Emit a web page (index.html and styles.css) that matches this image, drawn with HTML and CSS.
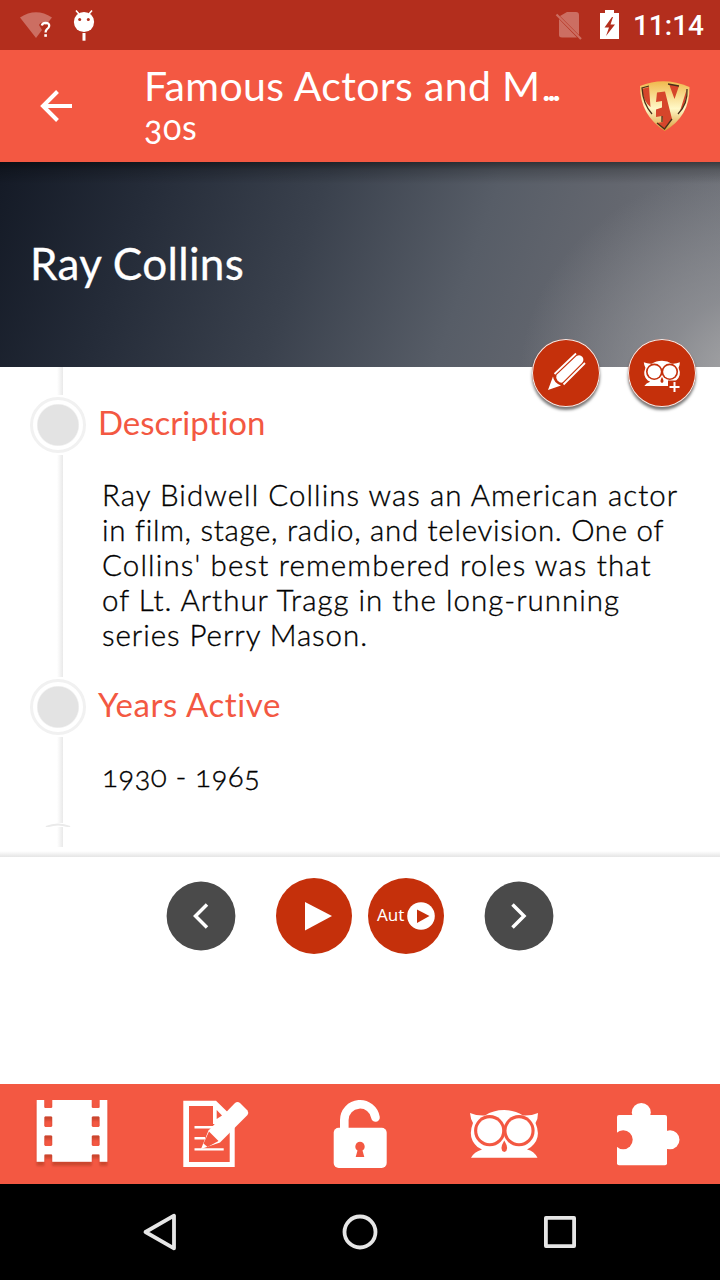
FILE: index.html
```html
<!DOCTYPE html>
<html lang="en">
<head>
<meta charset="utf-8">
<title>Ray Collins</title>
<link rel="stylesheet" href="styles.css">
</head>
<body>
<div class="screen">
  <div class="status">
    <svg class="status-left" viewBox="0 0 120 50" width="120" height="50">
      <path d="M20 17.5Q36 7 52 17.5L46 25Q41 20 39 25L42 30L36 38Z" fill="#cc6e62"/>
      <path d="M41.8 25.5Q42.4 22.8 45.5 22.8Q49.4 23 49.2 26Q49 28 46.8 29.4Q45.6 30.4 45.6 32.6" fill="none" stroke="#fff" stroke-width="2.3"/>
      <rect x="44.3" y="34.2" width="2.6" height="2.6" fill="#fff"/>
      <path d="M76 10.5L79 14M92 10.5L89 14" stroke="#fff" stroke-width="1.6"/>
      <circle cx="84" cy="22" r="10.1" fill="#fff"/>
      <circle cx="79.7" cy="19.5" r="1.5" fill="#b32e1d"/><circle cx="88.3" cy="19.5" r="1.5" fill="#b32e1d"/>
      <rect x="82.5" y="33" width="3" height="7.7" fill="#fff"/>
    </svg>
    <div class="status-right">
      <svg viewBox="550 0 74 50" width="74" height="50">
        <path d="M567 12H576Q579 12 579 15V35L560 16ZM559 19L577 37.5H562Q559 37.5 559 35Z" fill="#cc6e62"/>
        <path d="M556.5 14.5L581 39" stroke="#cc6e62" stroke-width="2.2"/>
        <path d="M600 13H605V10H614V13H619V39H600Z" fill="#fff"/>
        <path d="M612 17L604.5 27.5H609L606 36L615 24.5H610.5L613 17Z" fill="#b32e1d"/>
      </svg>
      <span class="clock">11:14</span>
    </div>
  </div>

  <header class="appbar">
    <svg class="back" viewBox="0 50 112 112" width="112" height="112"><path d="M72 106H43M57.5 91.5L43 106L57.5 120.5" fill="none" stroke="#fff" stroke-width="4"/></svg>
    <div class="titles">
      <div class="title">Famous Actors and M<span class="dots">...</span></div>
      <div class="subtitle">30s</div>
    </div>
    <svg class="logo" viewBox="630 50 70 112" width="70" height="112">
      <defs><linearGradient id="gold" x1="0" y1="0" x2="0" y2="1"><stop offset="0" stop-color="#f0b94d"/><stop offset=".55" stop-color="#fff9c8"/><stop offset="1" stop-color="#d99a35"/></linearGradient></defs>
      <path d="M640 86Q664 76 689.5 87Q690 116 664.7 131Q640 115 640 86Z" fill="url(#gold)"/>
      <path d="M642 89L649 87L650.5 107Q643 101 642 89ZM669 84L679 86L674.5 99ZM686.5 90Q686.5 104 680 111ZM657 92.5L665 91.5L672 119L664.5 129L657 123L663 122L662 116L656 117V109.5L662 107.5V101L656 102Z" fill="#d6452b"/>
      <path d="M649 86L642 88Q643 104 652 114M668 84L679 86M687 89Q688 104 678 114M662 116V122M657 123L664.5 129L672 119" fill="none" stroke="#49301a" stroke-width="1.3"/>
    </svg>
  </header>

  <section class="hero">
    <h1>Ray Collins</h1>
    <div class="fabs">
      <div class="fab"><svg viewBox="532 339 68 68" width="68" height="68">
        <path d="M554.5 374L576 353.5M563.5 384.5L585 363" stroke="#fff" stroke-width="1.8"/>
        <path d="M556.5 375L576.500 356Q580 354 582.5 357Q584.5 360 582 363L563 382Q561 384 557.5 380.5Q555.5 378 556.5 375Z" fill="#fff"/>
        <path d="M553 376.5Q553.5 382.5 561 385.500L548 390Z" fill="#fff"/>
      </svg></div>
      <div class="fab"><svg viewBox="628 339 68 68" width="68" height="68">
        <g transform="translate(662 373.5) scale(.53) translate(-504.3 -1134)"><use href="#owl" style="--bg:#c5300b"/></g>
        <path d="M668 380.5H681V393H668Z" fill="#c5300b"/>
        <path d="M674.5 382V392M669.5 387H679.5" stroke="#fff" stroke-width="2"/>
      </svg></div>
    </div>
  </section>

  <main class="details">
    <article class="entry first">
      <div class="rail"><i class="line top"></i><i class="marker"></i><i class="line rest"></i></div>
      <div class="text">
        <h2>Description</h2>
        <p><span class="l1">Ray Bidwell Collins was an American actor</span><br><span class="l2">in film, stage, radio, and television. One of</span><br><span class="l3">Collins' best remembered roles was that</span><br><span class="l4">of Lt. Arthur Tragg in the long-running</span><br><span class="l5">series Perry Mason.</span></p>
      </div>
    </article>
    <article class="entry second">
      <div class="rail"><i class="line top"></i><i class="marker"></i><i class="line rest"></i></div>
      <div class="text">
        <h2 class="active">Years Active</h2>
        <p class="years">1930 - 1965</p>
      </div>
    </article>
    <div class="rail tail"><svg viewBox="30 823 58 4" width="58" height="4"><path d="M46 827Q58 822 70 827" fill="none" stroke="#eaeaea" stroke-width="2"/></svg><i class="line rest"></i></div>
  </main>

  <div class="controls">
    <svg viewBox="0 0 70 70" width="70" height="70"><circle cx="35" cy="35" r="34.4" fill="#4a4a4a"/><path d="M41 23.5L29.5 35L41 46.5" fill="none" stroke="#fff" stroke-width="3.5"/></svg>
    <svg class="play" viewBox="0 0 76 76" width="76" height="76"><circle cx="38" cy="38" r="38" fill="#c5300b"/><path d="M29 24V52.5L56 38Z" fill="#fff"/></svg>
    <div class="auto"><span>Aut</span><svg viewBox="0 0 28 28" width="28" height="28"><circle cx="14" cy="14" r="13.8" fill="#fff"/><path d="M10 7.5V21L22.5 14Z" fill="#c5300b"/></svg></div>
    <svg class="next" viewBox="0 0 70 70" width="70" height="70"><circle cx="35" cy="35" r="34.4" fill="#4a4a4a"/><path d="M28.5 23.5L40 35L28.5 46.5" fill="none" stroke="#fff" stroke-width="3.5"/></svg>
  </div>

  <nav class="tabs">
    <svg viewBox="0 1084 144 100"><defs><filter id="drop" x="-10%" y="-10%" width="120%" height="130%"><feDropShadow dx="0" dy="4" stdDeviation="1" flood-color="#6e1d10" flood-opacity=".3"/></filter></defs>
      <path filter="url(#drop)" fill="#fff" fill-rule="evenodd" d="M36.7 1100H44.2V1107Q44.2 1108 45.5 1108H51Q52.3 1108 52.3 1107V1100H91.7V1107Q91.7 1108 93 1108H98.5Q99.7 1108 99.7 1107V1100H107.3V1161.7H99.7V1155.5Q99.7 1154.3 98.5 1154.3H93Q91.7 1154.3 91.7 1155.5V1161.7H52.3V1155.5Q52.3 1154.3 51 1154.3H45.5Q44.2 1154.3 44.2 1155.5V1161.7H36.7ZM45.2 1116.3H51.3L52.3 1117.3V1126L51.3 1127H45.2L44.2 1126V1117.3ZM45.2 1135.3H51.3L52.3 1136.3V1145L51.3 1146H45.2L44.2 1145V1136.3ZM92.7 1116.3H98.7L99.7 1117.3V1126L98.7 1127H92.7L91.7 1126V1117.3ZM92.7 1135.3H98.7L99.7 1136.3V1145L98.7 1146H92.7L91.7 1145V1136.3Z"/></svg>
    <svg viewBox="144 1084 144 100">
      <path fill="#fff" fill-rule="evenodd" d="M183.3 1100.7H216L234.7 1119V1167H183.3ZM189 1106V1162H229.7V1124H213V1106Z"/>
      <path d="M216.7 1110V1119L222 1115.5Z" fill="#f35842"/>
      <path d="M194.5 1127.2H213M194.5 1138.2H205M194.5 1149.4H223.7" stroke="#fff" stroke-width="2.4"/>
      <path d="M208.5 1130.5L235 1103Q237.5 1101 240 1103L247.5 1110.5Q249 1113 247.5 1115L220 1142.5L201 1149Z" fill="#fff"/>
      <path d="M209 1131.5L218.5 1141L207.5 1147L203.5 1143.5Z" fill="#f35842"/>
    </svg>
    <svg viewBox="288 1084 144 100">
      <path d="M344.3 1130V1120A15.7 15.7 0 0 1 375.5 1117.5" fill="none" stroke="#fff" stroke-width="8.6" stroke-linecap="round"/>
      <rect x="333.7" y="1127.7" width="53" height="40.3" rx="5" fill="#fff"/>
      <path d="M360 1141.7A4.8 4.8 0 0 1 362.5 1150.5L364.3 1157H355.7L357.5 1150.5A4.8 4.8 0 0 1 360 1141.7Z" fill="#f35842"/>
    </svg>
    <svg viewBox="432 1084 144 100" style="--bg:#f35842">
      <g id="owl">
        <path d="M470 1113Q477 1116 485 1115.5Q493 1110 504.3 1110Q515 1110 523 1115.5Q531 1116 538 1113Q538 1119 535.5 1123Q542 1138 531 1147L527 1149.5Q534 1151 537.5 1157.7H471Q474 1152 482 1149.5L477.5 1147Q467 1138 473 1123Q470.5 1119 470 1113Z" fill="#fff"/>
        <circle cx="489.7" cy="1130.7" r="15.6" class="ring"/><circle cx="519" cy="1130.7" r="15.6" class="ring"/>
        <circle cx="489.7" cy="1130.7" r="12.5" fill="#fff"/><circle cx="519" cy="1130.7" r="12.5" fill="#fff"/>
        <path d="M504.3 1140.5Q510 1150 504.3 1152Q498.5 1150 504.3 1140.5Z" class="ring"/>
      </g>
    </svg>
    <svg viewBox="576 1084 144 100">
      <rect x="617" y="1115" width="50" height="50.3" rx="2" fill="#fff"/>
      <circle cx="641.3" cy="1112.5" r="9.5" fill="#fff"/><circle cx="670" cy="1139.7" r="9.5" fill="#fff"/>
      <circle cx="623.2" cy="1139.7" r="9.5" fill="#f35842"/>
    </svg>
  </nav>

  <div class="sysnav">
    <svg viewBox="120 1184 480 96" width="480" height="96" fill="none" stroke="#e6e6e6" stroke-width="3.8" stroke-linejoin="round"><path d="M145.5 1232L174 1215.7V1248.3Z"/><circle cx="360" cy="1232" r="15.5"/><rect x="545.9" y="1217.9" width="28.2" height="28.2"/></svg>
  </div>
</div>
</body>
</html>
```
FILE: styles.css
```css
* { box-sizing: border-box; }
body { margin: 0; font-family: Lato, "Open Sans", sans-serif; background: #fff; }
svg { display: block; }
.screen { width: 720px; height: 1280px; display: flex; flex-direction: column; overflow: hidden; }
.status { height: 50px; flex: none; background: #b32e1d; display: flex; justify-content: space-between; }
.status-right { display: flex; align-items: center; padding-right: 16px; color: #fff; }
.clock { font: 500 28px/50px Roboto, sans-serif; margin-left: 9px; padding-top: 2px; }
.appbar { height: 112px; flex: none; background: #f35842; color: #fff; display: flex; position: relative; }
.titles { flex: 1; padding: 11px 0 0 32px; white-space: nowrap; }
.title { font-size: 41px; line-height: 50px; letter-spacing: .35px; }
.dots { letter-spacing: -4.5px; margin-left: 1px; }
.subtitle { font-size: 34px; line-height: 32px; letter-spacing: .7px; font-variant-numeric: oldstyle-nums; }
.logo { margin-right: 20px; }
.hero { height: 205px; flex: none; position: relative; padding-left: 30px; display: flex; align-items: center; color: #fff;
  background: linear-gradient(#0007, #0003 8px, #0000 22px), radial-gradient(ellipse 240px 210px at 760px 215px, #aaaaab 0, #96979bb0 40%, #8a8c9200 100%), linear-gradient(109deg, #141a26 0, #252c39 20%, #3a414d 42%, #575d67 64%, #64676f 80%, #74777e 100%); }
h1 { margin: -4px 0 0; font-size: 44px; font-weight: 400; line-height: 54px; letter-spacing: .35px; -webkit-text-stroke: .3px; }
.fabs { position: absolute; left: 532px; top: 177px; display: flex; gap: 28px; }
.fab { width: 68px; height: 68px; border-radius: 50%; background: #c5300b; box-shadow: inset 0 0 0 1px #eee, 0 3px 3px #0008; }
.ring { fill: var(--bg); }
.details { height: 480px; flex: none; padding-left: 30px; }
.entry { display: flex; }
.first { height: 282px; }
.second { height: 174px; }
.rail { width: 58px; flex: none; display: flex; flex-direction: column; }
.line { display: block; width: 6px; margin-left: 27px; background: linear-gradient(90deg, #fff, #e9e9e9); }
.top { height: 28px; }
.marker { display: block; width: 56px; height: 56px; margin: 2px 0; border: 3px solid #f1f1f1; border-radius: 50%; background: radial-gradient(circle, #e3e3e3 20px, #fff 21.5px); }
.rest { flex: 1; }
.tail { height: 24px; }
.text { padding-top: 35px; }
h2 { margin: 0 0 0 10px; font-size: 33px; line-height: 40px; font-weight: 400; color: #f35842; font-variant-ligatures: none; }
.active { letter-spacing: .6px; }
p { margin: 35px 0 0 14px; font-size: 29.5px; font-weight: 300; color: #000; -webkit-text-stroke: .35px #000; line-height: 35px; white-space: nowrap; font-variant-numeric: oldstyle-nums; }
.l1 { letter-spacing: 1.05px; }
.l2 { letter-spacing: .7px; }
.l3 { letter-spacing: 1.15px; }
.l4 { letter-spacing: 1px; }
.l5 { letter-spacing: .95px; }
.years { margin-top: 34px; letter-spacing: .35px; }
.controls { height: 237px; flex: none; display: flex; align-items: flex-start; padding: 31px 0 0 166px; position: relative; background: linear-gradient(#fff 4px, #ededed 8px, #e6e6e6 10px, #fff 10px); }
.controls > svg:not(.play) { margin-top: 3px; }
.play { margin-left: 40px; }
.auto { width: 76px; height: 76px; margin: 0 40px 0 16px; border-radius: 50%; background: #c5300b; color: #fff; display: flex; align-items: center; padding-left: 9px; }
.auto span { font: 17px "Noto Sans", sans-serif; width: 30px; margin-top: -3px; }
.tabs { height: 100px; flex: none; display: grid; grid-template-columns: repeat(5, 144px); background: #f35842; }
.tabs svg { width: 144px; height: 100px; }
.sysnav { height: 96px; flex: none; background: #000; padding-left: 120px; }
```
